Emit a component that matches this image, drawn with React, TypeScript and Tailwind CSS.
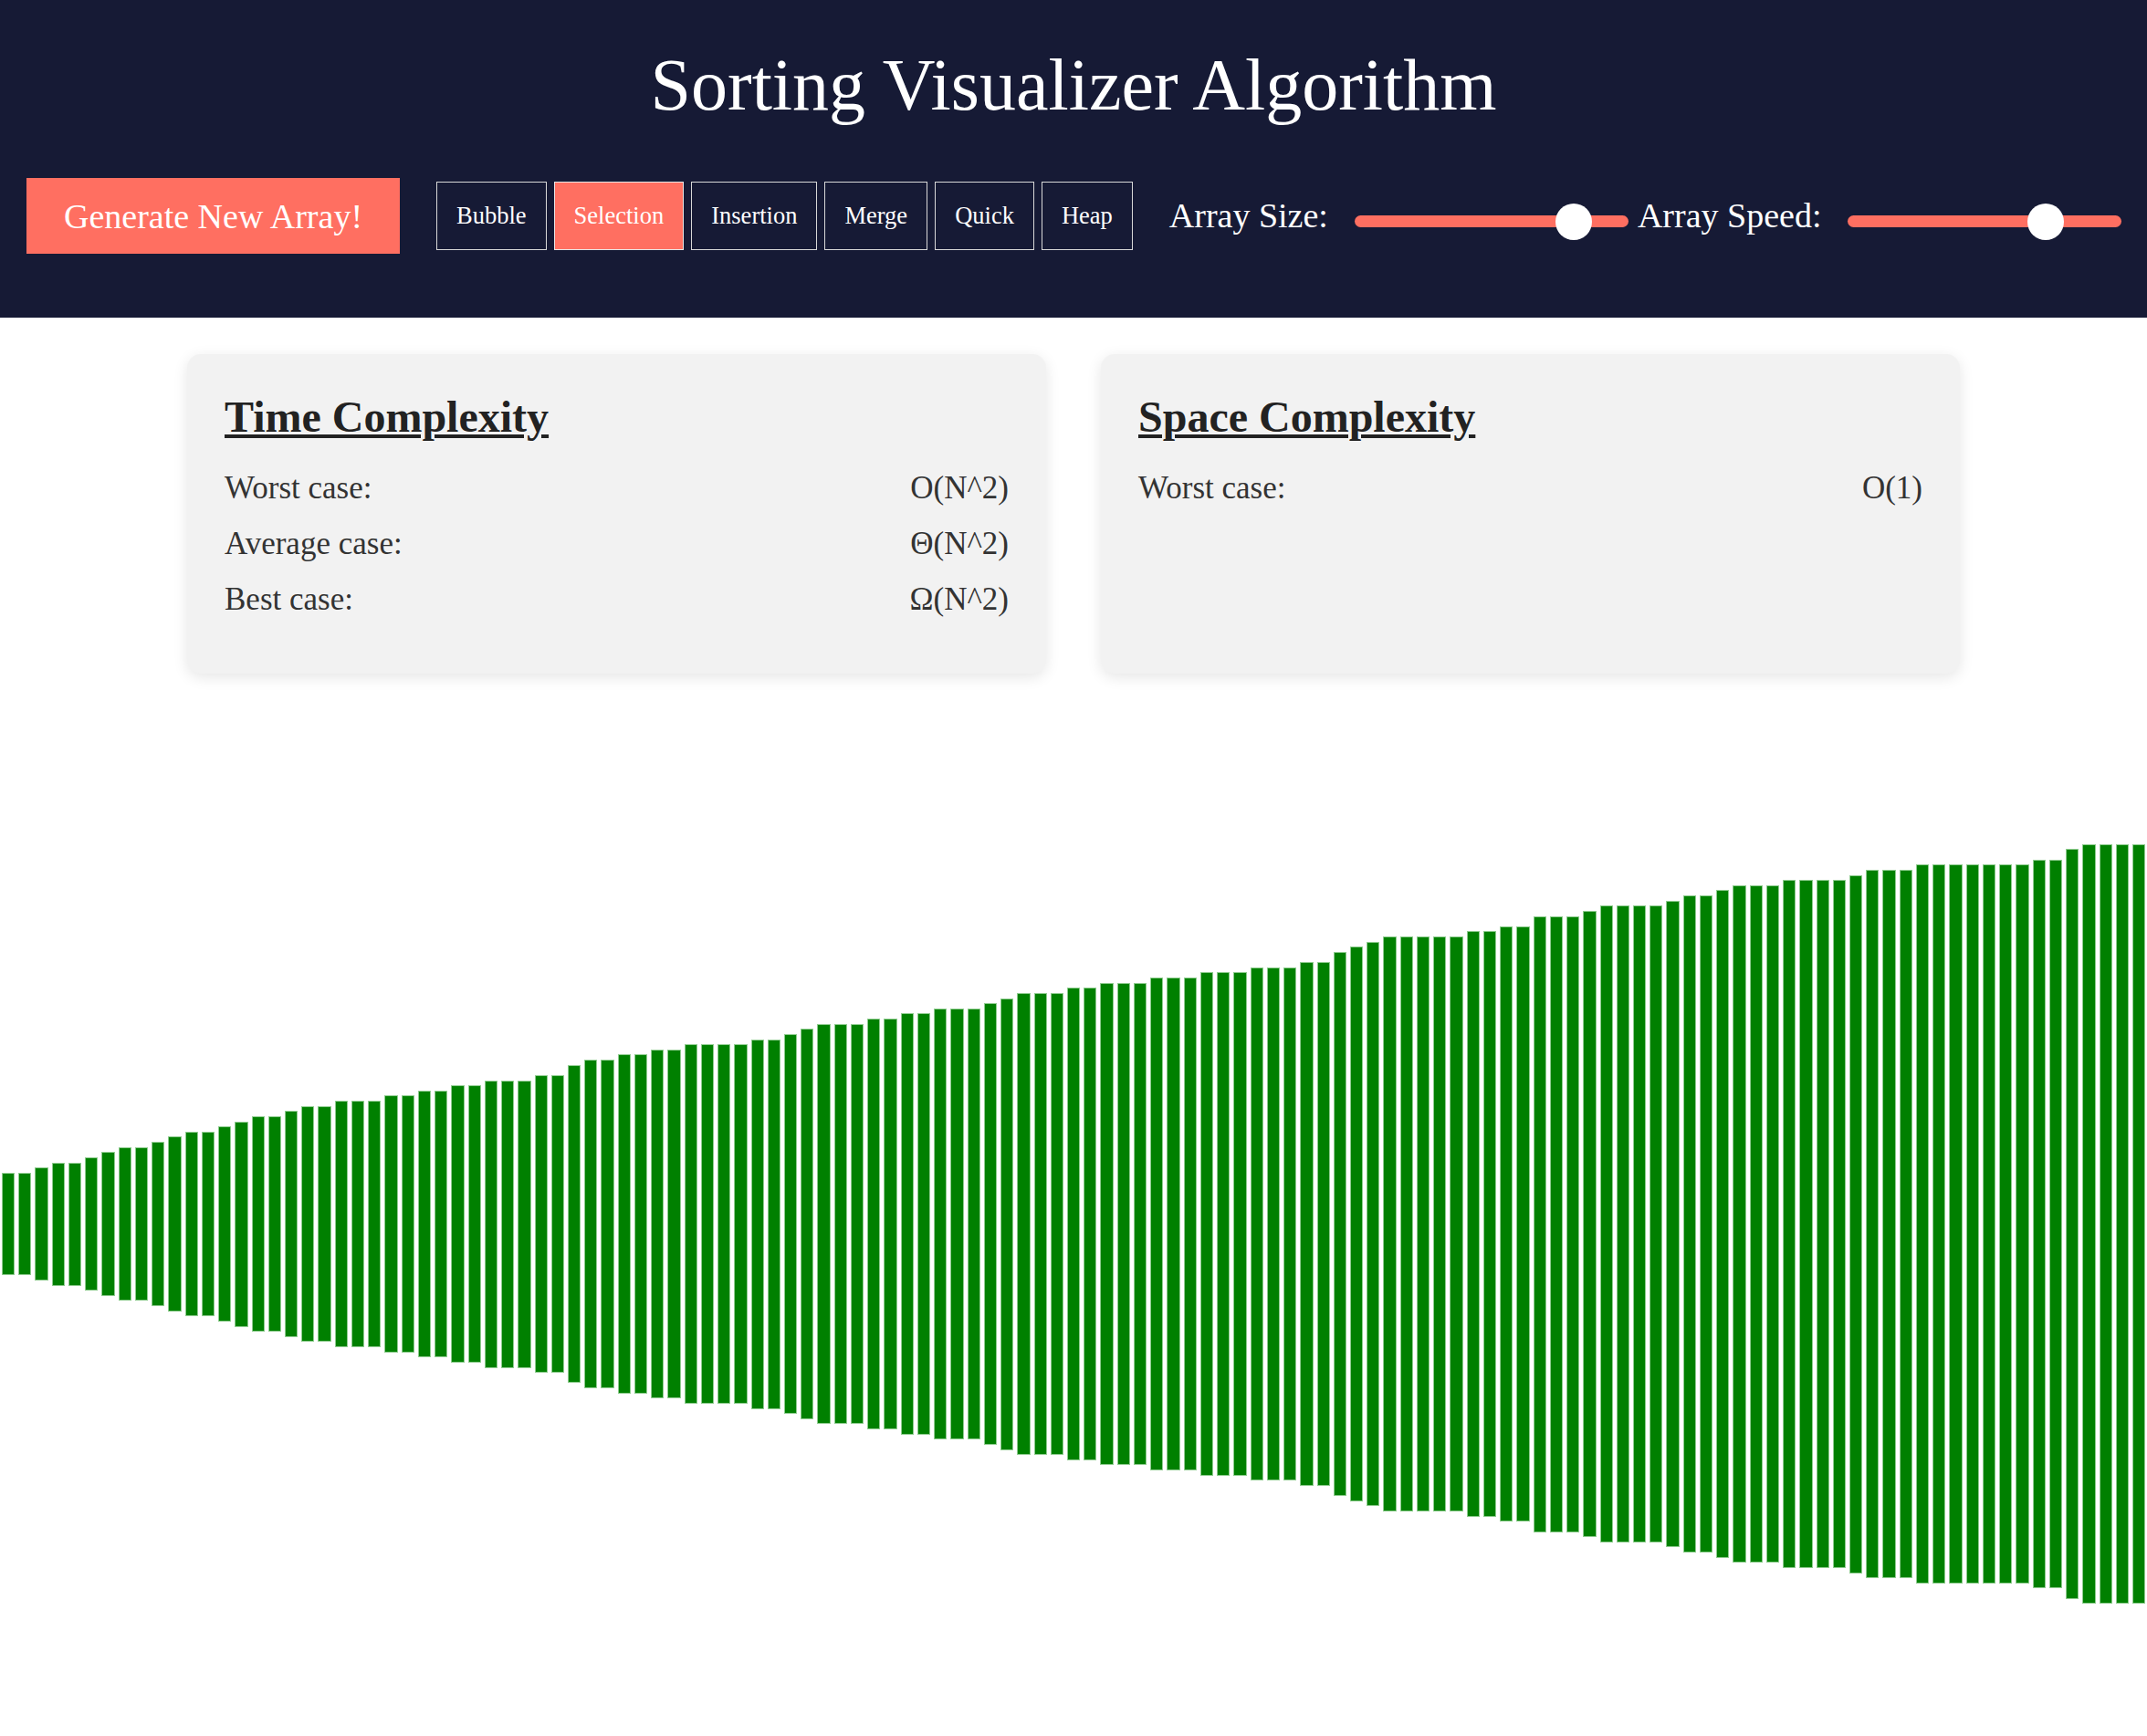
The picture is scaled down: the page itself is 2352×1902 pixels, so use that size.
import React from "react";

const ALGORITHMS = ["Bubble", "Selection", "Insertion", "Merge", "Quick", "Heap"];
const ACTIVE_ALGORITHM = "Selection";

const timeRows = [
  { label: "Worst case:", value: "O(N^2)" },
  { label: "Average case:", value: "Θ(N^2)" },
  { label: "Best case:", value: "Ω(N^2)" },
];

const spaceRows = [{ label: "Worst case:", value: "O(1)" }];

const BAR_COUNT = 129;
const UNIT = 11.25;

// rough shape of the sorted array: [column, bar height]
const curve: [number, number][] = [
  [0, 111], [8.2, 174], [16.5, 246], [24.7, 291], [32.9, 327], [36.2, 369],
  [41.1, 384], [46.1, 411], [49.4, 435], [52.7, 459], [57.6, 471], [60.9, 504],
  [65.8, 522], [69.1, 540], [74, 552], [77.3, 567], [80.6, 594], [82.3, 621],
  [86.4, 630], [90.5, 651], [92.1, 669], [94.6, 690], [98.7, 702], [104.5, 741],
  [108.6, 753], [111.9, 774], [115.2, 786], [120.9, 792], [123.4, 807],
  [124.2, 822], [128, 833],
];

function seeded(seed: number) {
  let s = seed;
  return () => {
    s = (s * 1664525 + 1013904223) % 4294967296;
    return s / 4294967296;
  };
}

function interp(x: number) {
  for (let i = 1; i < curve.length; i++) {
    const [x0, y0] = curve[i - 1];
    const [x1, y1] = curve[i];
    if (x <= x1) return y0 + ((x - x0) / (x1 - x0)) * (y1 - y0);
  }
  return curve[curve.length - 1][1];
}

const rand = seeded(42);
const bars = Array.from({ length: BAR_COUNT }, (_, i) => {
  const noise = i === 0 || i === BAR_COUNT - 1 ? 0 : (rand() - 0.5) * UNIT * 0.9;
  return Math.round((interp(i) + noise) / UNIT) * UNIT;
}).sort((a, b) => a - b);

function Slider({ value }: { value: number }) {
  return (
    <div className="relative mt-[12px] h-[13px] w-[300px] shrink-0 rounded-full bg-[#ff6f61]">
      <div
        className="absolute top-1/2 h-[40px] w-[40px] -translate-y-1/2 rounded-full bg-white"
        style={{ left: value * 260 }}
      />
    </div>
  );
}

function ComplexityCard({
  title,
  rows,
}: {
  title: string;
  rows: { label: string; value: string }[];
}) {
  return (
    <div className="rounded-[15px] bg-[#f2f2f2] px-[41px] pt-[41px] pb-[51px] shadow-[0_4px_16px_rgba(0,0,0,0.1)]">
      <h2 className="text-[48px] leading-[56px] font-bold text-[#222] underline decoration-[4px] underline-offset-[3px]">
        {title}
      </h2>
      <div className="mt-[19px]">
        {rows.map((row) => (
          <div
            key={row.label}
            className="flex justify-between text-[35px] leading-[61px] text-[#333]"
          >
            <span>{row.label}</span>
            <span>{row.value}</span>
          </div>
        ))}
      </div>
    </div>
  );
}

export default function App() {
  return (
    <div className="min-h-[1902px] bg-white font-['Liberation_Serif',serif]">
      <header className="h-[348px] bg-[#161a35] pt-[47px]">
        <h1 className="text-center text-[80px] leading-[92px] font-normal text-white">
          Sorting Visualizer Algorithm
        </h1>
        <div className="mt-[56px] flex h-[83px] items-center whitespace-nowrap pl-[29px]">
          <button className="h-[83px] shrink-0 bg-[#ff6f61] px-[41px] text-[38px] leading-none text-white">
            Generate New Array!
          </button>
          <div className="ml-[40px] flex shrink-0 gap-[8px]">
            {ALGORITHMS.map((name) => (
              <button
                key={name}
                className={
                  name === ACTIVE_ALGORITHM
                    ? "flex h-[75px] items-center border border-[#e6e6e6] bg-[#ff6f61] px-[21px] text-[26.5px] text-white"
                    : "flex h-[75px] items-center border border-[#d8d8d8] bg-[#161a35] px-[21px] text-[26.5px] text-white"
                }
              >
                {name}
              </button>
            ))}
          </div>
          <span className="ml-[40px] shrink-0 text-[38px] text-white">Array Size:</span>
          <div className="ml-[29px] shrink-0">
            <Slider value={0.846} />
          </div>
          <span className="ml-[10px] shrink-0 text-[38px] text-white">Array Speed:</span>
          <div className="ml-[29px] shrink-0">
            <Slider value={0.754} />
          </div>
        </div>
      </header>

      <section className="mx-auto mt-[40px] grid w-[1942px] grid-cols-2 gap-[60px]">
        <ComplexityCard title="Time Complexity" rows={timeRows} />
        <ComplexityCard title="Space Complexity" rows={spaceRows} />
      </section>

      <div className="mt-[42px] flex h-[1122px] w-full items-center">
        {bars.map((h, i) => (
          <div
            key={i}
            className="mx-[2px] flex-1 border border-[#8fcc8f] bg-[#008000]"
            style={{ height: h }}
          />
        ))}
      </div>
    </div>
  );
}
